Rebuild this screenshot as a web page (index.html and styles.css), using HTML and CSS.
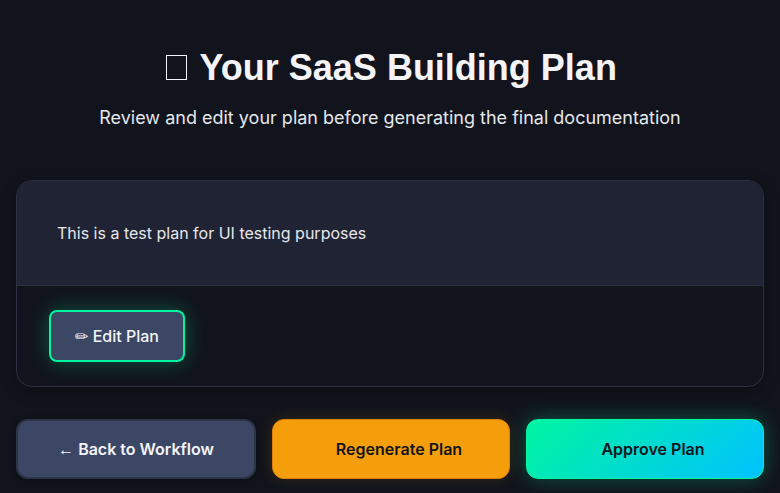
FILE: index.html
```html
<!DOCTYPE html>
<html lang="en">
<head>
<meta charset="utf-8">
<title>Your SaaS Building Plan</title>
<link rel="stylesheet" href="styles.css">
</head>
<body>
<main class="page">
  <header class="header">
    <h1 class="title"><span class="title-icon"></span> Your SaaS Building Plan</h1>
    <p class="subtitle">Review and edit your plan before generating the final documentation</p>
  </header>
  <section class="card">
    <div class="plan"><p>This is a test plan for UI testing purposes</p></div>
    <div class="toolbar"><button class="btn edit"><span class="pencil">✏&#xFE0E;</span> Edit Plan</button></div>
  </section>
  <div class="actions">
    <button class="btn back"><span class="arrow">←</span> Back to Workflow</button>
    <button class="btn regenerate">Regenerate Plan</button>
    <button class="btn approve">Approve Plan</button>
  </div>
</main>
</body>
</html>
```
FILE: styles.css
```css
* { box-sizing: border-box; margin: 0; padding: 0; }
html { overflow: hidden; }
body { background: #11141c; color: #e5e7eb; font-family: Inter, sans-serif; font-size: 16px; }
.page { padding: 41px 16px 14px; }
.header { text-align: center; height: 139px; }
.title { font: 700 36px/54px "Liberation Sans", sans-serif; color: #f4f4f6; }
.title-icon { display: inline-block; width: 21px; height: 25px; margin: 0 3px 0 3px; border: 1px solid #f4f4f6; vertical-align: baseline; }
.subtitle { margin-top: 8px; font-size: 18px; line-height: 29px; }
.card { height: 207px; border: 1px solid #2d3042; border-radius: 16px; overflow: hidden; box-shadow: 0 4px 16px rgba(0,0,0,.3); }
.plan { height: 105px; padding: 40px; line-height: 25px; background: #202333; border-bottom: 1px solid #2d3042; }
.toolbar { padding: 24px 32px; }
.btn { font: 600 16px/24px Inter, sans-serif; color: #f4f4f6; border-radius: 12px; }
.edit { width: 136px; height: 52px; font-weight: 500; border: 2px solid #00f5a0; border-radius: 8px; background: #3c4766; box-shadow: 0 0 20px rgba(0,245,160,.3); }
.pencil { font-family: "DejaVu Sans", sans-serif; line-height: 1; }
.arrow { font-family: "Liberation Sans", sans-serif; font-weight: 400; line-height: 1; }
.actions { display: grid; grid-template-columns: 240px 238px 238px; gap: 16px; margin-top: 32px; }
.actions .btn { height: 60px; }
.back { background: #3c4766; border: 2px solid #2d3348; box-shadow: 0 2px 8px rgba(0,0,0,.3); }
.regenerate { background: #f59e0b; border: 1px solid #e07f08; color: #11141c; padding-left: 16px; box-shadow: 0 0 16px rgba(245,158,11,.15); }
.approve { background: linear-gradient(135deg, #00f5a0, #00c2ff); border: 1px solid #00f5a0; color: #11141c; padding-left: 16px; box-shadow: 0 0 20px rgba(0,245,160,.3); }
```
